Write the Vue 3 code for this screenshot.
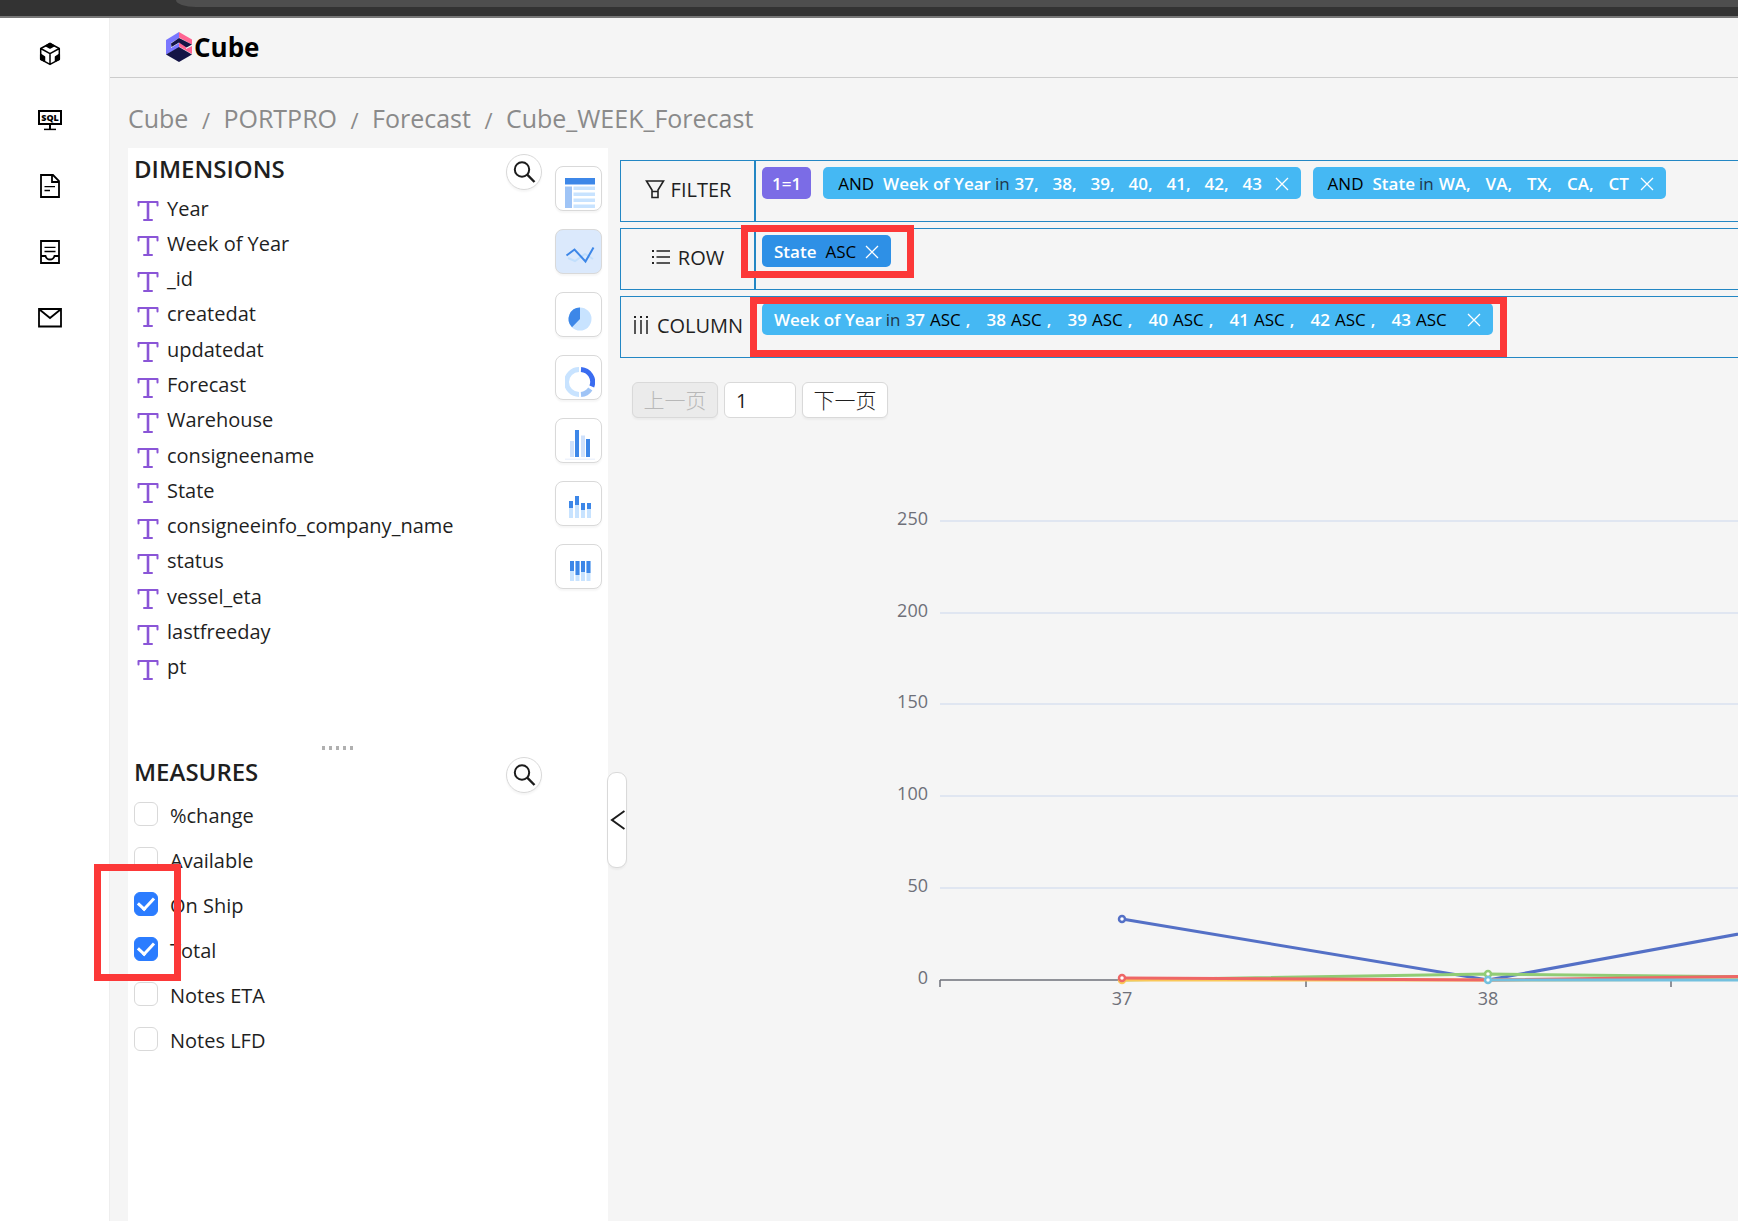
<script setup>
import { ref } from 'vue'

const dimensions = [
  'Year', 'Week of Year', '_id', 'createdat', 'updatedat', 'Forecast', 'Warehouse',
  'consigneename', 'State', 'consigneeinfo_company_name', 'status', 'vessel_eta', 'lastfreeday', 'pt',
]
const measures = ref([
  { name: '%change', on: false },
  { name: 'Available', on: false },
  { name: 'On Ship', on: true },
  { name: 'Total', on: true },
  { name: 'Notes ETA', on: false },
  { name: 'Notes LFD', on: false },
])
const crumbs = ['Cube', 'PORTPRO', 'Forecast', 'Cube_WEEK_Forecast']
const weeks = [37, 38, 39, 40, 41, 42, 43]
const states = ['WA', 'VA', 'TX', 'CA', 'CT']
const chartTypes = ['table', 'line', 'pie', 'donut', 'bar', 'stacked', 'percent']
const active = ref('line')
const page = ref('1')
const grid = [
  { v: 250, y: 90 }, { v: 200, y: 182 }, { v: 150, y: 273 }, { v: 100, y: 365 }, { v: 50, y: 457 },
]
</script>

<template>
  <div class="page">
    <div class="chrome"><div class="chrome-tab"></div></div>
    <div class="shell">
      <nav class="rail" aria-label="Main">
        <a href="#" aria-label="Cubes">
          <svg width="24" height="24" viewBox="0 0 24 24" fill="none" stroke="#000" stroke-width="1.5" stroke-linejoin="round">
            <path d="M12 1.5 21.3 6.5V17.3L12 22.4 2.7 17.3V6.5Z M2.7 6.5 12 11.7 21.3 6.5 M12 11.7V22.4" />
            <path d="M12 1.5 16 3.8 12 6 8 3.8Z M2.7 12.5 6.5 15V19L2.7 17.3Z M21.3 12.5 17.5 15V19L21.3 17.3Z" fill="#000" />
          </svg>
        </a>
        <a href="#" aria-label="SQL">
          <svg width="24" height="24" viewBox="0 0 24 24" fill="none" stroke="#000" stroke-width="2">
            <path d="M1 3H23V16H1Z M12 16V21" />
            <path d="M6 21.4H18" stroke-width="1.5" />
            <text x="12" y="12.6" text-anchor="middle" class="sql">SQL</text>
          </svg>
        </a>
        <a href="#" aria-label="Documents">
          <svg width="24" height="24" viewBox="0 0 24 24" fill="none" stroke="#000" stroke-width="1.8">
            <path d="M3 1H15L21 7V23H3Z M14 1V8H21" />
            <path d="M6.5 12.6H17 M6.5 16.5H12" stroke-width="1.4" />
          </svg>
        </a>
        <a href="#" aria-label="Inbox">
          <svg width="24" height="24" viewBox="0 0 24 24" fill="none" stroke="#000" stroke-width="1.8">
            <path d="M3 1H21V23H3Z M3 16H7.5Q8.5 19.5 12 19.5T16.5 16H21" />
            <path d="M6.5 7.4H17.5 M6.5 11.5H17.5" stroke-width="1.4" />
          </svg>
        </a>
        <a href="#" aria-label="Mail">
          <svg width="24" height="24" viewBox="0 0 24 24" fill="none" stroke="#000" stroke-width="1.8">
            <path d="M1 3H23V20.5H1Z M1.5 3.5 12 12 22.5 3.5" />
          </svg>
        </a>
      </nav>

      <div class="content">
        <header class="top">
          <svg width="26" height="30" viewBox="0 0 26 30">
            <path d="M0 8 13 0V6L5 11V16L13 11V16L0 22.5Z" fill="#7a77ff" />
            <path d="M13 0 26 7.5V12.5L13 5.5Z M26 13V22L13 14.5V10L20 14V17L26 14Z" fill="#ff6492" />
            <path d="M5 11.5 13 6 26 12.5 20.5 15.5 13 10.5 5.5 15Z" fill="#141446" />
            <path d="M0 22.5 13 15 26 22.5 13 30Z" fill="#141446" />
          </svg>
          <span class="brand">Cube</span>
        </header>

        <nav class="crumbs" aria-label="Breadcrumb">
          <template v-for="(c, i) in crumbs" :key="c">
            <span v-if="i" class="sep">/</span><a href="#">{{ c }}</a>
          </template>
        </nav>

        <div class="work">
          <aside class="panel">
            <div class="fields">
              <section class="dims">
                <div class="head">
                  <h2>DIMENSIONS</h2>
                  <button class="search" aria-label="Search dimensions">
                    <svg width="24" height="24" viewBox="0 0 24 24" fill="none" stroke="#1c1c1c" stroke-width="2">
                      <circle cx="10" cy="9.5" r="7.2" /><path d="M15.2 14.7 22.5 22" stroke-width="2.4" />
                    </svg>
                  </button>
                </div>
                <ul class="dim-list">
                  <li v-for="d in dimensions" :key="d">
                    <svg width="22" height="22" viewBox="0 0 22 22" fill="none" stroke="#8a55d7" stroke-width="2">
                      <path d="M1.5 5.5V2H20.5V5.5" stroke-linejoin="round" stroke-linecap="round" /><path d="M11 2V19.5" stroke-width="2.6" /><path d="M7 20H15" stroke-linecap="round" />
                    </svg>
                    <span>{{ d }}</span>
                  </li>
                </ul>
              </section>
              <div class="grip"><i v-for="n in 5" :key="n"></i></div>
              <section class="meas">
                <div class="head">
                  <h2>MEASURES</h2>
                  <button class="search" aria-label="Search measures">
                    <svg width="24" height="24" viewBox="0 0 24 24" fill="none" stroke="#1c1c1c" stroke-width="2">
                      <circle cx="10" cy="9.5" r="7.2" /><path d="M15.2 14.7 22.5 22" stroke-width="2.4" />
                    </svg>
                  </button>
                </div>
                <div class="meas-list">
                  <label v-for="m in measures" :key="m.name">
                    <input v-model="m.on" type="checkbox" /><span>{{ m.name }}</span>
                  </label>
                  <div class="mark mark-checks"></div>
                </div>
              </section>
            </div>

            <div class="types">
              <button v-for="t in chartTypes" :key="t" :class="{ on: active === t }" :aria-label="t + ' chart'" @click="active = t">
                <svg width="30" height="30" viewBox="0 0 30 30" fill="none">
                  <template v-if="t === 'table'">
                    <path d="M0 0H30V6H0Z" fill="#3d87e8" /><path d="M0 6H30V7H0Z" fill="#9fc4f6" />
                    <path d="M0 8.5H7V30H0Z" fill="#9fc4f6" />
                    <path d="M8.5 8.5H30V12H8.5Z M8.5 14.5H30V18H8.5Z M8.5 20.5H30V24H8.5Z M8.5 26.5H30V30H8.5Z" fill="#c8e3ff" />
                  </template>
                  <template v-else-if="t === 'line'">
                    <path d="M3 17 10 20 20 13 28 18" stroke="#c2dffc" stroke-width="2" />
                    <path d="M1.5 14.5 9.5 8.5 20.5 20.5 28.5 6.5" stroke="#3d87e8" stroke-width="2" />
                  </template>
                  <template v-else-if="t === 'pie'">
                    <circle cx="15" cy="15" r="11.5" fill="#c8e3ff" /><path d="M15 15V3.5A11.5 11.5 0 0 0 7 23.2Z" fill="#3d87e8" />
                  </template>
                  <template v-else-if="t === 'donut'">
                    <path d="M14 2.5A12.5 12.5 0 0 0 14 27.5" stroke="#c8e3ff" stroke-width="5" />
                    <path d="M16 2.5A12.5 12.5 0 0 1 26.8 19.5" stroke="#3a6cf0" stroke-width="5" />
                    <path d="M25.3 22A12.5 12.5 0 0 1 16 27.5" stroke="#9fc4f6" stroke-width="5" />
                  </template>
                  <template v-else-if="t === 'bar'">
                    <path d="M5 11H9V27H5Z M16 5.5H20V27H16Z" fill="#cfe1fb" /><path d="M10 0H14V27H10Z M21 9H25V27H21Z" fill="#3d87e8" /><path d="M0 28.5H30V30H0Z" fill="#eef3fc" />
                  </template>
                  <template v-else-if="t === 'stacked'">
                    <path d="M4 11H8V25H4Z M10 8H14V25H10Z M16 13H20V25H16Z M22 13H26V25H22Z" fill="#c8e3ff" />
                    <path d="M4 8H8V15H4Z M10 3H14V12H10Z M16 10H20V17H16Z M22 10H26V16H22Z" fill="#3d87e8" />
                  </template>
                  <template v-else>
                    <path d="M5 5H9V25H5Z M10.5 5H14.5V25H10.5Z M16 5H20V25H16Z M21.5 5H25.5V25H21.5Z" fill="#c8e3ff" />
                    <path d="M5 5H9V15H5Z M10.5 5H14.5V19H10.5Z M16 5H20V16H16Z M21.5 5H25.5V17H21.5Z" fill="#3d87e8" />
                  </template>
                </svg>
              </button>
            </div>
            <button class="collapse" aria-label="Collapse panel">
              <svg width="16" height="22" viewBox="0 0 16 22" fill="none" stroke="#1c1c1c" stroke-width="2"><path d="M15.5 2 3 11 15.5 20" /></svg>
            </button>
          </aside>

          <main class="board">
            <div class="shelves">
              <div class="shelf">
                <div class="label">
                  <svg width="20" height="20" viewBox="0 0 20 20" fill="none" stroke="#222" stroke-width="1.6"><path d="M1.5 2H18.5L13 11V18.5H7V11Z M7 12.5H13" /></svg>
                  <span>FILTER</span>
                </div>
                <div class="drop">
                  <span class="tag purple">1=1</span>
                  <span class="tag wide">
                    <b class="dark">AND</b><b class="name">Week of Year</b><em>in</em>
                    <b v-for="(w, i) in weeks" :key="w" class="week">{{ w }}<template v-if="i < 6">,</template></b>
                    <button class="x" aria-label="Remove"><svg width="14" height="14" viewBox="0 0 14 14" stroke="#fff" stroke-width="1.3"><path d="M1 1 13 13M13 1 1 13" /></svg></button>
                  </span>
                  <span class="tag wide">
                    <b class="dark">AND</b><b class="name">State</b><em>in</em>
                    <b v-for="(s, i) in states" :key="s" class="st">{{ s }}<template v-if="i < 4">,</template></b>
                    <button class="x" aria-label="Remove"><svg width="14" height="14" viewBox="0 0 14 14" stroke="#fff" stroke-width="1.3"><path d="M1 1 13 13M13 1 1 13" /></svg></button>
                  </span>
                </div>
              </div>
              <div class="shelf">
                <div class="label">
                  <svg width="18" height="18" viewBox="0 0 18 18" fill="none" stroke="#222" stroke-width="1.5"><path d="M0 3H2M0 9H2M0 15H2" stroke-width="2" /><path d="M4.5 3H18M4.5 9H18M4.5 15H18" /></svg>
                  <span class="row-text">ROW</span>
                </div>
                <div class="drop">
                  <span class="tag blue">
                    <b>State</b><b class="dark asc">ASC</b>
                    <button class="x" aria-label="Remove"><svg width="14" height="14" viewBox="0 0 14 14" stroke="#fff" stroke-width="1.3"><path d="M1 1 13 13M13 1 1 13" /></svg></button>
                  </span>
                </div>
                <div class="mark mark-row"></div>
              </div>
              <div class="shelf">
                <div class="label">
                  <svg width="16" height="18" viewBox="0 0 16 18" fill="none" stroke="#222" stroke-width="1.5"><path d="M2 0V2M8 0V2M14 0V2" stroke-width="2" /><path d="M2 4V18M8 4V18M14 4V18" /></svg>
                  <span class="row-text">COLUMN</span>
                </div>
                <div class="drop">
                  <span class="tag">
                    <b>Week of Year</b><em>in</em>
                    <span v-for="(w, i) in weeks" :key="w" class="pair"><b>{{ w }}</b><b class="dark">ASC</b><b v-if="i < 6">,</b></span>
                    <button class="x" aria-label="Remove"><svg width="14" height="14" viewBox="0 0 14 14" stroke="#fff" stroke-width="1.3"><path d="M1 1 13 13M13 1 1 13" /></svg></button>
                  </span>
                </div>
                <div class="mark mark-column"></div>
              </div>
            </div>

            <div class="pager">
              <button disabled>上一页</button>
              <input v-model="page" type="text" aria-label="Page" />
              <button>下一页</button>
            </div>

            <svg class="chart" role="img" aria-label="Line chart by week">
              <g v-for="g in grid" :key="g.v">
                <line x1="320" x2="100%" :y1="g.y" :y2="g.y" stroke="#e0e6f1" stroke-width="2" />
                <text x="308" :y="g.y + 4" text-anchor="end">{{ g.v }}</text>
              </g>
              <text x="308" y="553" text-anchor="end">0</text>
              <path d="M320 549H1300 M320 549V556 M686 549V556 M1051 549V556" stroke="#6e7079" stroke-width="1.5" fill="none" />
              <text x="502" y="574" text-anchor="middle">37</text>
              <text x="868" y="574" text-anchor="middle">38</text>
              <g fill="none" stroke-width="3">
                <path d="M502 488 868 549 1233 482" stroke="#5470c6" />
                <path d="M502 549 868 543 1233 547" stroke="#91cc75" />
                <path d="M502 549H868L1233 548" stroke="#fac858" />
                <path d="M502 547 868 549 1233 544" stroke="#ee6666" />
                <path d="M868 549H1233" stroke="#73c0de" />
              </g>
              <g fill="#fff" stroke-width="2.5">
                <circle cx="502" cy="488" r="3" stroke="#5470c6" />
                <circle cx="868" cy="543" r="3" stroke="#91cc75" />
                <circle cx="502" cy="549" r="3" stroke="#fac858" />
                <circle cx="502" cy="547" r="3" stroke="#ee6666" />
                <circle cx="868" cy="549" r="3" stroke="#73c0de" />
              </g>
            </svg>
          </main>
        </div>
      </div>
    </div>
  </div>
</template>

<style>
body { background: #f5f5f5; overflow-x: hidden; }
</style>

<style scoped>
* { box-sizing: border-box; }
.page { min-height: 100vh; display: flex; flex-direction: column; font-family: "Open Sans", "Noto Sans", "Noto Sans CJK SC", sans-serif; font-size: 20px; color: #1f1f1f; }
button, input { font: inherit; color: inherit; margin: 0; padding: 0; }
a { color: inherit; text-decoration: none; }
.chrome { height: 18px; background: #333; border-bottom: 2px solid #777; padding-left: 176px; }
.chrome-tab { height: 7px; background: #4e4e4e; border-bottom-left-radius: 20px 7px; }
.shell { flex: 1; display: flex; }
.rail { width: 110px; background: #fff; border-right: 1px solid #eee; padding: 24px 9px 0 0; display: flex; flex-direction: column; align-items: center; gap: 42px; }
.rail a, .rail svg { display: block; height: 24px; }
.sql { font: 900 9px "Open Sans", sans-serif; fill: #000; stroke: none; }
.content { flex: 1; min-width: 0; display: flex; flex-direction: column; }
.top { height: 60px; border-bottom: 1px solid #ccc; padding: 0 0 1px 56px; display: flex; align-items: center; gap: 2px; }
.brand { font-size: 26px; font-weight: 700; color: #000; }
.crumbs { height: 70px; padding: 10px 0 0 18px; display: flex; align-items: center; font-size: 25px; line-height: 36px; color: #8a8a8a; }
.sep { width: 35px; text-align: center; font-size: 22px; padding-top: 3px; }
.work { flex: 1; display: flex; padding-left: 18px; }
.panel { width: 480px; background: #fff; display: flex; position: relative; }
.fields { flex: 1; }
.head { display: flex; justify-content: space-between; align-items: flex-start; padding: 6px 13px 0 6px; height: 43px; }
h2 { margin: 0; font-size: 24px; line-height: 30px; font-weight: 600; }
.search { width: 36px; height: 36px; border: 1px solid #d9d9d9; border-radius: 50%; background: #fff; box-shadow: 0 2px 2px #0000000a; display: grid; place-items: center; }
.dims { height: 596px; }
.dim-list { list-style: none; margin: 0; padding: 0 0 0 9px; height: 494px; display: grid; grid-auto-rows: 1fr; }
.dim-list li { display: flex; align-items: center; gap: 8px; line-height: 30px; }
.dim-list li svg { margin-top: 5px; }
.grip { height: 7px; padding: 2px 0 0 194px; display: flex; gap: 4px; }
.grip i { width: 3px; height: 4px; background: #b0b0b0; }
.meas-list { position: relative; padding: 6px 0 0 6px; display: grid; gap: 15px; justify-items: start; }
.meas-list label { display: flex; align-items: center; gap: 12px; height: 30px; }
.meas-list input { appearance: none; width: 24px; height: 24px; border: 1px solid #d9d9d9; border-radius: 6px; background: #fff; margin-bottom: 3px; }
.meas-list input:checked { border-color: #2b7cff; background: #2b7cff; display: grid; place-items: center; }
.meas-list input:checked::before { content: ""; width: 7px; height: 13px; border: solid #fff; border-width: 0 3px 3px 0; transform: translateY(-2px) rotate(43deg); }
.mark { position: absolute; border: 7px solid #fc3838; pointer-events: none; }
.mark-checks { left: -34px; top: 70px; width: 87px; height: 117px; z-index: 2; }
.types { width: 53px; padding-top: 18px; display: flex; flex-direction: column; gap: 18px; }
.types button { width: 47px; height: 45px; border: 1px solid #d9d9d9; border-radius: 8px; background: #fff; box-shadow: 0 2px 2px #0000000a; padding: 9px 0 0 2px; display: grid; place-items: center; }
.types button.on { background: #dbe9fc; }
.collapse { position: absolute; left: 479px; top: 624px; width: 20px; height: 96px; border: 1px solid #d9d9d9; border-radius: 9px; background: #fff; box-shadow: 0 2px 2px #0000000a; display: grid; place-items: center; }
.board { flex: 1; min-width: 0; padding: 12px 0 0 12px; display: flex; flex-direction: column; overflow: hidden; }
.shelves { display: grid; gap: 6px; }
.shelf { position: relative; height: 62px; display: flex; border: 1px solid #2387c4; border-right: 0; }
.label { width: 135px; border-right: 2px solid #2387c4; display: flex; align-items: center; justify-content: center; gap: 6px; padding: 0 0 4px 1px; white-space: nowrap; font-weight: 500; }
.row-text { padding-left: 2px; }
.drop { flex: 1; display: flex; align-items: flex-start; padding: 6px 0 0 6px; gap: 12px; }
.tag { height: 32px; border-radius: 5px; background: #45b8f3; color: #fff; font-size: 17px; line-height: 30px; display: flex; align-items: center; padding: 2px 12px 0; white-space: nowrap; }
.tag b { font-weight: 600; }
.tag em { font-style: normal; color: #20364a; margin: 0 5px 0 4px; }
.tag .dark { color: #000; font-weight: 500; }
.x { border: 0; background: none; width: 14px; height: 14px; display: block; line-height: 0; }
.purple { background: #7b6ce6; font-weight: 600; padding: 2px 10px 0; }
.blue { background: #2e90e6; }
.wide { padding-left: 15px; }
.name { margin-left: 9px; }
.week { width: 38px; }
.week:nth-last-child(2) { width: 32px; }
.st { margin-right: 15px; }
.st:nth-last-child(2) { margin-right: 11px; }
.asc { margin: 0 9px; }
.pair { width: 81px; display: flex; gap: 5px; }
.pair:nth-last-child(2) { width: 75px; }
.mark-row { left: 120px; top: -4px; width: 173px; height: 53px; }
.mark-column { left: 129px; top: 0; width: 757px; height: 60px; }
.pager { padding: 24px 0 0 12px; display: flex; gap: 6px; }
.pager button { width: 86px; height: 36px; border: 1px solid #d9d9d9; border-radius: 6px; background: #fff; box-shadow: 0 2px 2px #0000000a; line-height: 32px; font-size: 21px; font-weight: 300; }
.pager button:disabled { background: #ebebeb; color: #b8b8b8; }
.pager input { width: 72px; height: 36px; border: 1px solid #d9d9d9; border-radius: 6px; background: #fff; padding: 0 11px; }
.chart { display: block; width: 100%; height: 620px; margin-top: 13px; }
.chart text { font-size: 18px; fill: #6e7079; }
</style>
